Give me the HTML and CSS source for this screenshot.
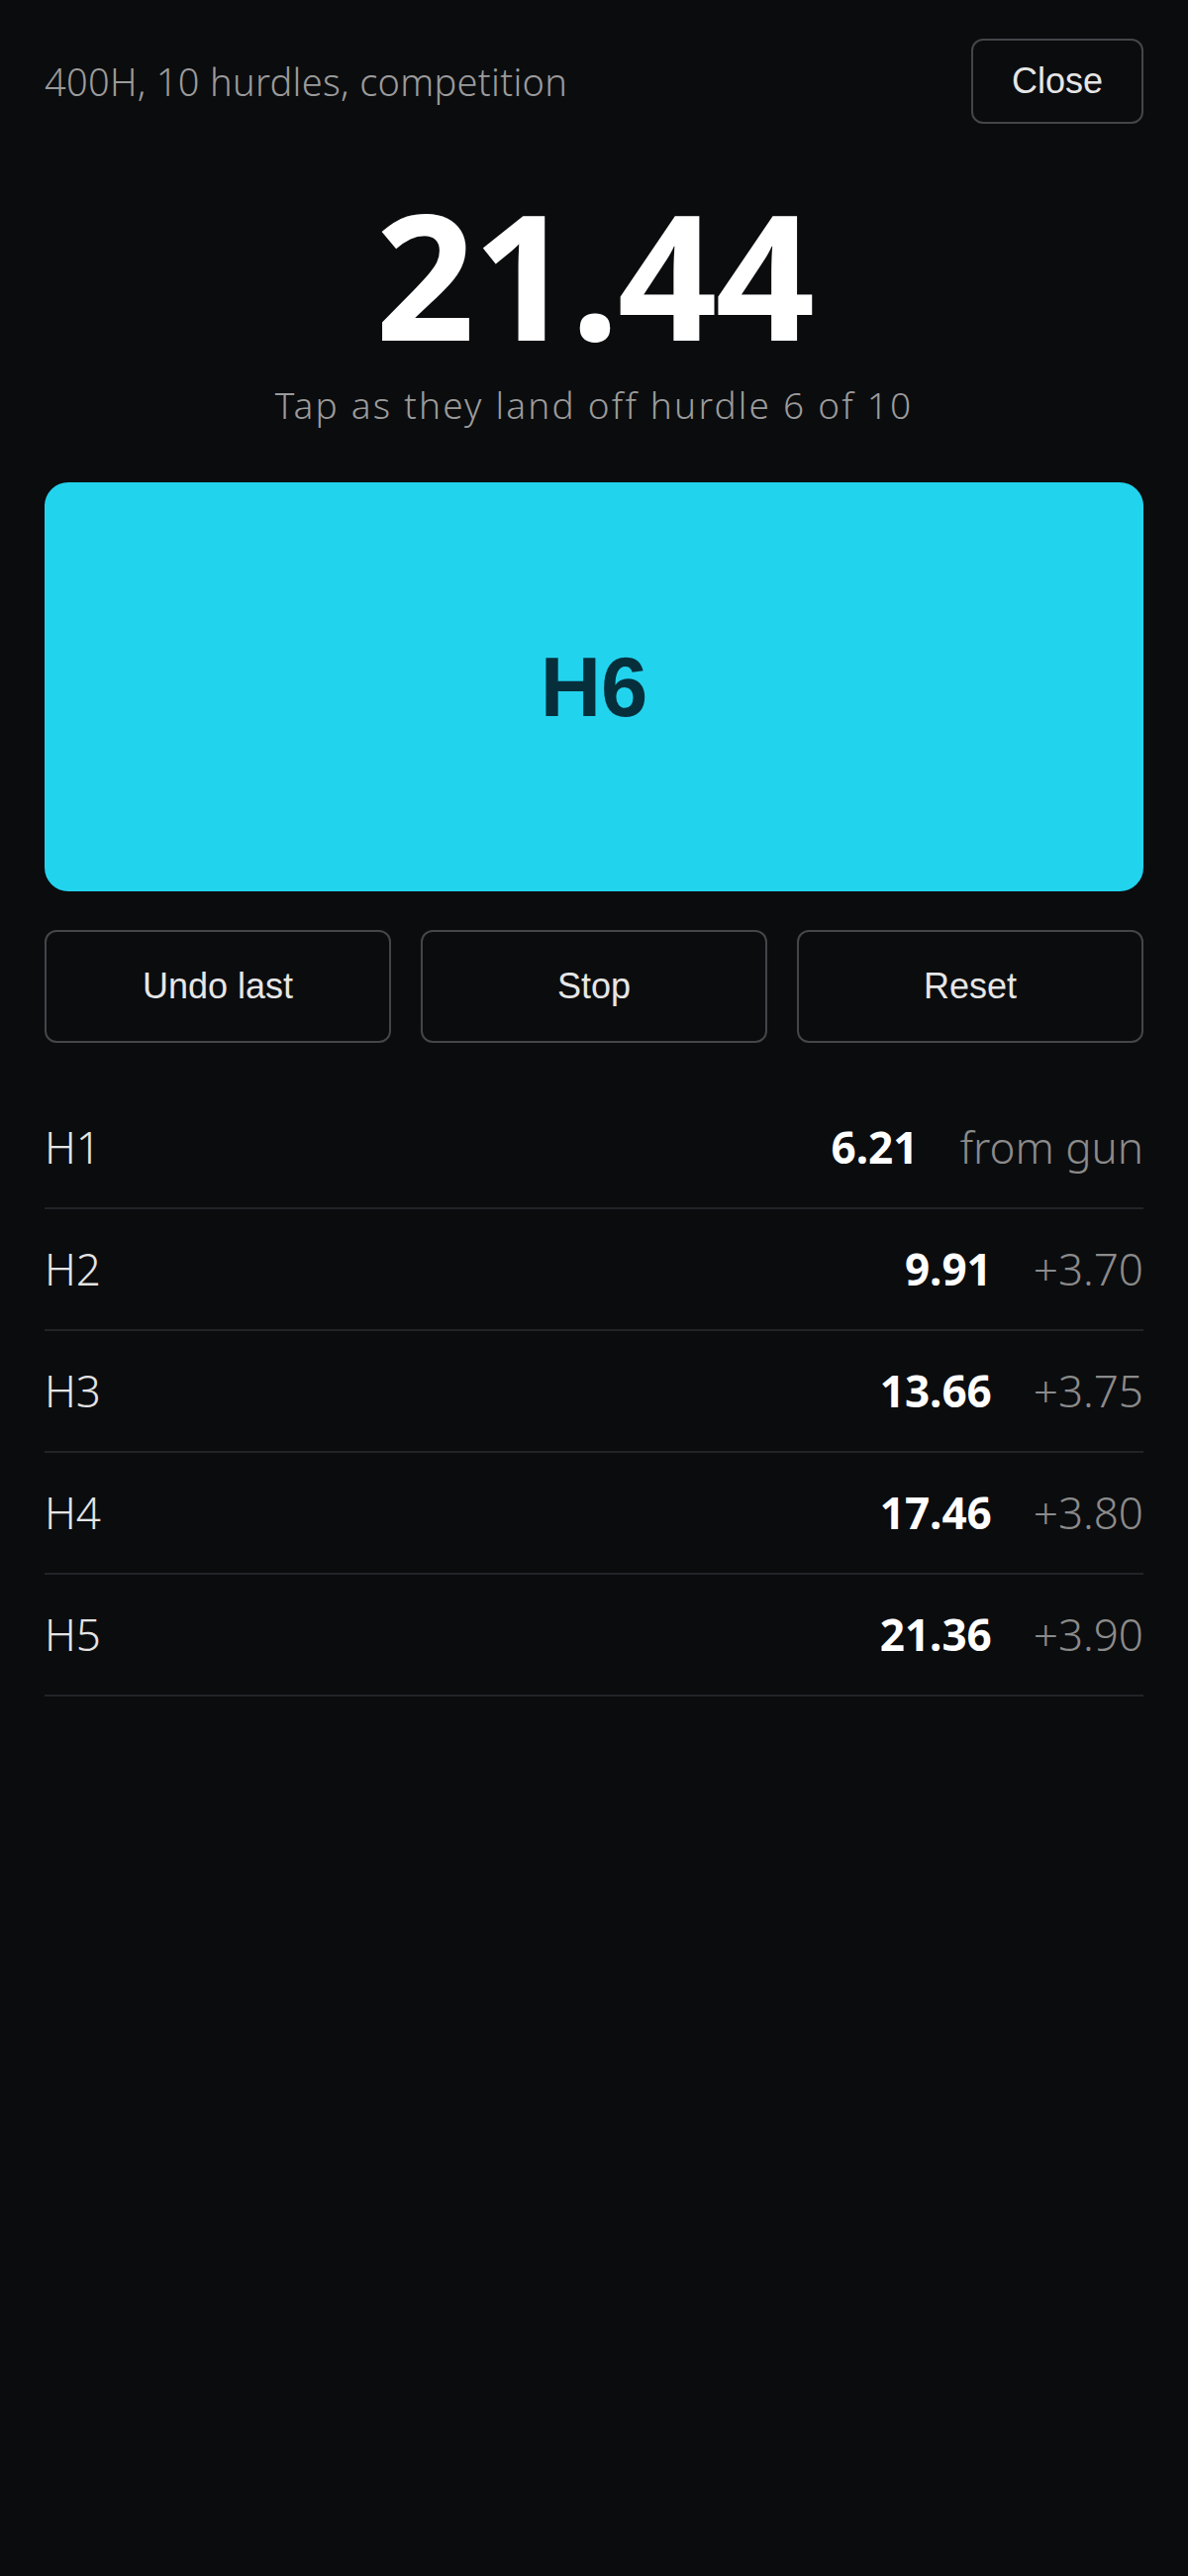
FILE: index.html
```html
<!DOCTYPE html>
<html lang="en">
<head>
<meta charset="utf-8">
<title>400H split timer</title>
<link rel="stylesheet" href="styles.css">
</head>
<body>
<div class="screen">
  <header class="topbar">
    <div class="event">400H, 10 hurdles, competition</div>
    <button class="btn close-btn">Close</button>
  </header>

  <div class="clock">21.44</div>
  <div class="hint">Tap as they land off hurdle 6 of 10</div>

  <button class="tap">H6</button>

  <div class="actions">
    <button class="btn action">Undo last</button>
    <button class="btn action">Stop</button>
    <button class="btn action">Reset</button>
  </div>

  <ul class="splits">
    <li class="split"><span class="label">H1</span><span class="time">6.21</span><span class="delta">from gun</span></li>
    <li class="split"><span class="label">H2</span><span class="time">9.91</span><span class="delta">+3.70</span></li>
    <li class="split"><span class="label">H3</span><span class="time">13.66</span><span class="delta">+3.75</span></li>
    <li class="split"><span class="label">H4</span><span class="time">17.46</span><span class="delta">+3.80</span></li>
    <li class="split"><span class="label">H5</span><span class="time">21.36</span><span class="delta">+3.90</span></li>
  </ul>
</div>
</body>
</html>
```

FILE: styles.css
```css
html, body {
  margin: 0;
  padding: 0;
  background: #0b0c0e;
}

body {
  font-family: "Noto Sans", "Open Sans", sans-serif;
  color: #e5e5e5;
  min-height: 2601px;
}

.screen {
  padding: 39px 45px 0 45px;
}

.topbar {
  display: flex;
  justify-content: space-between;
  align-items: center;
}

.event {
  font-size: 38px;
  font-weight: 300;
  letter-spacing: 0.3px;
  color: #9b9b9b;
}

.btn {
  font-family: "Liberation Sans", Arial, sans-serif;
  font-size: 36px;
  color: #e6e6e6;
  background: transparent;
  border: 2px solid #45454a;
  border-radius: 12px;
  cursor: pointer;
}

.close-btn {
  height: 86px;
  padding: 0 39px;
}

.clock {
  margin-top: 63px;
  font-size: 176px;
  line-height: 176px;
  font-weight: 700;
  text-align: center;
  color: #ffffff;
  letter-spacing: -2px;
}

.hint {
  margin-top: 19px;
  font-size: 37px;
  font-weight: 300;
  letter-spacing: 2.2px;
  text-align: center;
  color: #9b9b9b;
}

.tap {
  display: block;
  width: 100%;
  height: 413px;
  margin-top: 53px;
  border: none;
  border-radius: 24px;
  background: #22d3ee;
  color: #062f3b;
  font-family: "Liberation Sans", Arial, sans-serif;
  font-weight: 700;
  font-size: 85px;
  cursor: pointer;
}

.actions {
  margin-top: 39px;
  display: grid;
  grid-template-columns: repeat(3, 1fr);
  gap: 30px;
}

.action {
  height: 114px;
}

.splits {
  list-style: none;
  margin: 45px 0 0 0;
  padding: 0;
}

.split {
  display: flex;
  align-items: center;
  padding: 30px 0;
  line-height: 61px;
  font-size: 44px;
  border-bottom: 2px solid #232428;
}

.label {
  flex: 1;
  font-weight: 300;
  color: #e4e4e4;
}

.time {
  font-weight: 700;
  color: #ffffff;
}

.delta {
  margin-left: 42px;
  font-weight: 300;
  color: #8b8b8b;
}
```
